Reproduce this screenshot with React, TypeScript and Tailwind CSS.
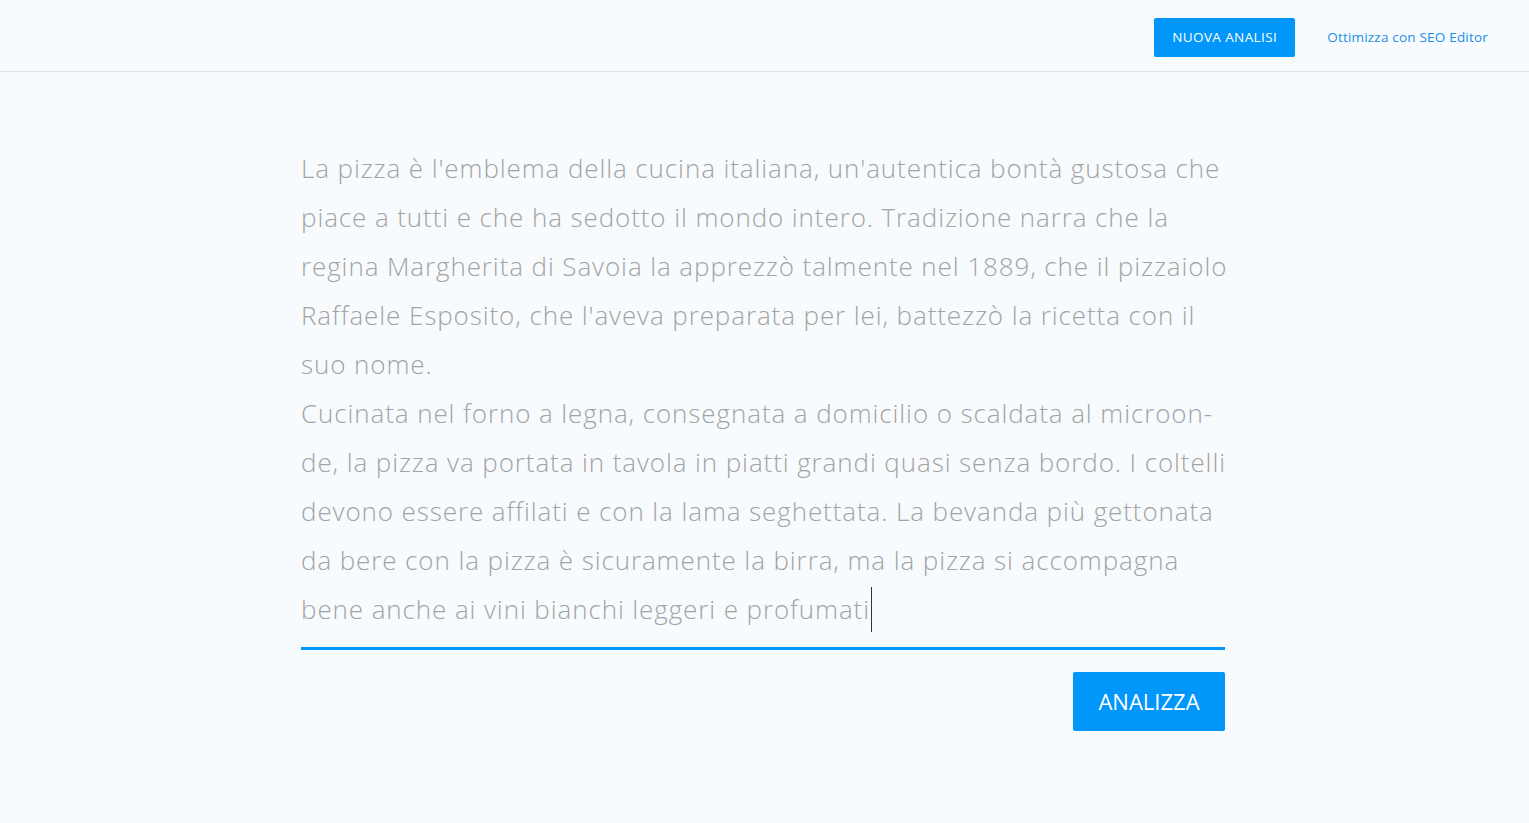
import React from "react";

const lines = [
  "La pizza è l'emblema della cucina italiana, un'autentica bontà gustosa che",
  "piace a tutti e che ha sedotto il mondo intero. Tradizione narra che la",
  "regina Margherita di Savoia la apprezzò talmente nel 1889, che il pizzaiolo",
  "Raffaele Esposito, che l'aveva preparata per lei, battezzò la ricetta con il",
  "suo nome.",
  "Cucinata nel forno a legna, consegnata a domicilio o scaldata al microon-",
  "de, la pizza va portata in tavola in piatti grandi quasi senza bordo. I coltelli",
  "devono essere affilati e con la lama seghettata. La bevanda più gettonata",
  "da bere con la pizza è sicuramente la birra, ma la pizza si accompagna",
];

export default function App() {
  return (
    <div
      className="min-h-[823px] w-full bg-[#f7fbfe]"
      style={{ fontFamily: "'Open Sans', 'Noto Sans', sans-serif" }}
    >
      <header className="flex h-[72px] items-center justify-end border-b border-[#dfe4e8] pr-[41px] pt-[3px]">
        <button className="flex h-[39px] w-[141px] items-center justify-center rounded-[2px] bg-[#0096fa] text-[13.5px] tracking-[0.4px] text-white">
          NUOVA ANALISI
        </button>
        <a className="ml-[32px] text-[13.5px] tracking-[0.2px] text-[#1a8ee8]">Ottimizza con SEO Editor</a>
      </header>
      <main className="ml-[299px] w-[926px] pt-[72px]">
        <div className="pl-[2px] text-[26px] font-light leading-[49px] tracking-[0.9px] text-[#a3a3a3]">
          {lines.map((l, i) => (
            <div key={i} className="whitespace-nowrap">
              {l}
            </div>
          ))}
          <div className="flex items-center whitespace-nowrap">
            bene anche ai vini bianchi leggeri e profumati
            <span className="ml-[1px] inline-block h-[45px] w-[1.5px] bg-[#333]" />
          </div>
        </div>
        <div className="ml-[2px] mt-[13px] h-[3px] w-[924px] bg-[#0096fa]" />
        <div className="mt-[22px] flex justify-end">
          <button className="flex h-[59px] w-[152px] items-center justify-center rounded-[2px] bg-[#0096fa] text-[22px] text-white">
            ANALIZZA
          </button>
        </div>
      </main>
    </div>
  );
}
